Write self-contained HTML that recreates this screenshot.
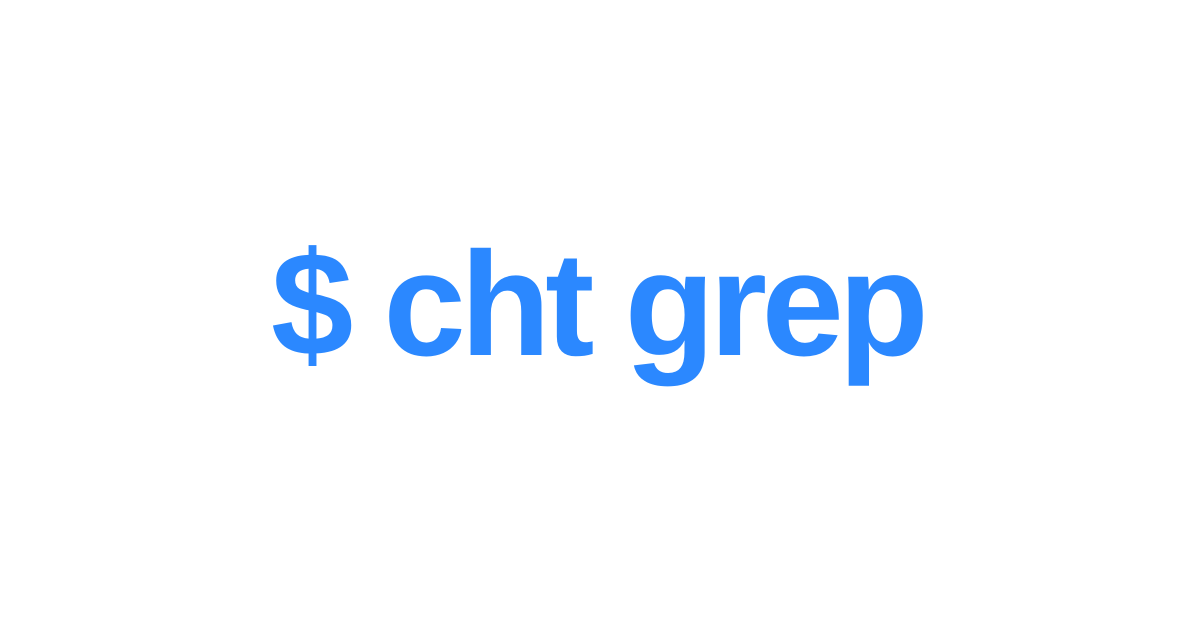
<!DOCTYPE html>
<html>
<head>
<meta charset="utf-8">
<style>
  html, body { margin: 0; padding: 0; background: #ffffff; }
  body { width: 1200px; height: 628px; overflow: hidden; }
  svg { display: block; }
</style>
</head>
<body>
<svg width="1200" height="628" viewBox="0 0 1200 628" xmlns="http://www.w3.org/2000/svg">
  <rect width="1200" height="628" fill="#ffffff"/>
  <text x="271" y="355" font-family="'Liberation Sans', sans-serif" font-weight="bold" font-size="148" letter-spacing="-5.5" fill="#2b88ff">$ cht grep</text>
</svg>
</body>
</html>
